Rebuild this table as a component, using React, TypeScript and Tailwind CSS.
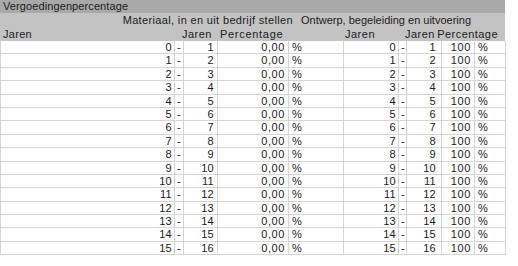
import React from 'react';

// Rows of the table: year ranges 0-1 ... 15-16
const rows = Array.from({ length: 16 }, (_, i) => ({ from: i, to: i + 1 }));

const cell = 'border-r border-b border-[#d6d6d6] h-[13.4px] leading-[13px] overflow-visible whitespace-nowrap';

export default function App() {
  return (
    <div
      className="w-[518px] h-[266px] bg-white text-[11px] text-[#1c1c1c] tracking-[0.3px]"
      style={{ fontFamily: '"Liberation Sans", Arial, sans-serif' }}
    >
      <div className="w-[505px]">
        {/* Title bar */}
        <div className="h-[13px] bg-[#a9a9a9] pl-[3px] leading-[13px] tracking-[0.1px]">Vergoedingenpercentage</div>

        {/* Header rows */}
        <div className="flex h-[14px] bg-[#c3c3c3] leading-[14px] whitespace-nowrap">
          <div className="w-[297px] text-right pr-[4px] tracking-[0.35px]">Materiaal, in en uit bedrijf stellen</div>
          <div className="pl-[4px] tracking-[0px]">Ontwerp, begeleiding en uitvoering</div>
        </div>
        <div className="grid grid-cols-[174px_9px_34px_71px_55px_55px_8px_35px_33px_31px] bg-[#c3c3c3]">
          <div className="h-[14px] leading-[14px] pl-[3px]">Jaren</div>
          <div className="col-span-2 h-[14px] leading-[14px] text-right pr-[5px] tracking-[0.5px]">Jaren</div>
          <div className="col-span-2 h-[14px] leading-[14px] pl-[3px] tracking-[0.7px] whitespace-nowrap">Percentage</div>
          <div className="h-[14px] leading-[14px] pl-[2px] tracking-[0.5px]">Jaren</div>
          <div className="col-span-2 h-[14px] leading-[14px] text-right pr-[6px] tracking-[0.5px]">Jaren</div>
          <div className="col-span-2 h-[14px] leading-[14px] flex justify-end pr-[7px] tracking-[0.45px] whitespace-nowrap">
            Percentage
          </div>
        </div>

        {/* Data rows */}
        <div className="grid grid-cols-[174px_9px_34px_71px_55px_55px_8px_35px_33px_31px] border-l border-[#d6d6d6]">
          {rows.map(r => (
            <React.Fragment key={r.from}>
              <div className={`${cell} text-right pr-[2px]`}>{r.from}</div>
              <div className={`${cell} pl-[2px]`}>-</div>
              <div className={`${cell} text-right pr-[3px]`}>{r.to}</div>
              <div className={`${cell} text-right pr-[3px] tracking-[0.6px]`}>0,00</div>
              <div className={`${cell} pl-[3px]`}>%</div>
              <div className={`${cell} text-right pr-[2px]`}>{r.from}</div>
              <div className={`${cell} pl-[2px]`}>-</div>
              <div className={`${cell} text-right pr-[5px]`}>{r.to}</div>
              <div className={`${cell} text-right pr-[3px] tracking-[0.6px]`}>100</div>
              <div className={`${cell} pl-[3px]`}>%</div>
            </React.Fragment>
          ))}
        </div>
      </div>
    </div>
  );
}
